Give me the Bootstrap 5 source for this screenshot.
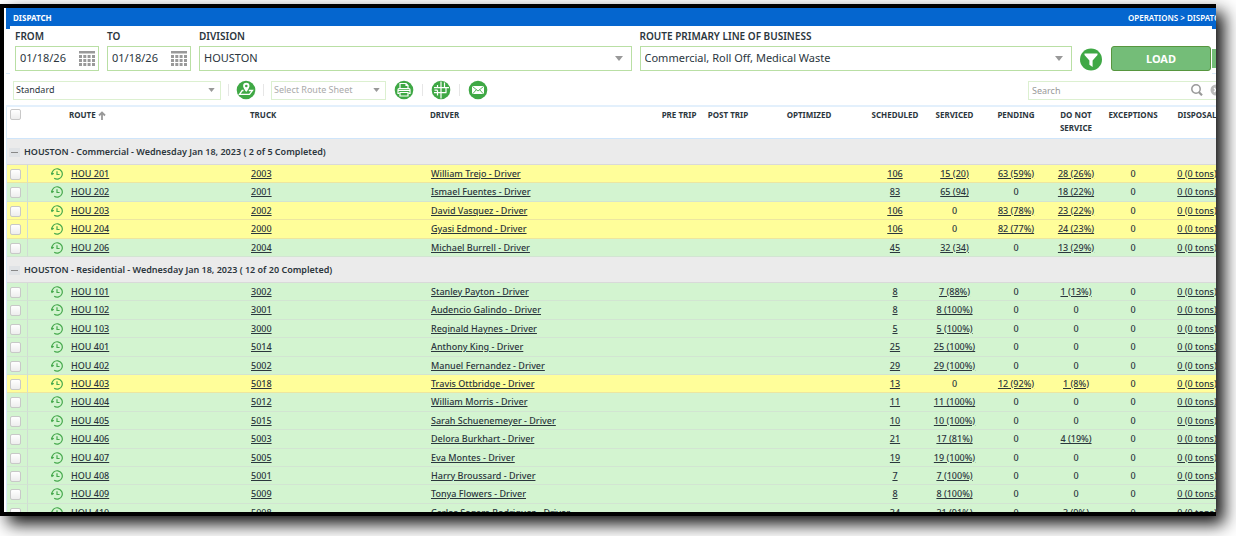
<!DOCTYPE html>
<html lang="en">
<head>
<meta charset="utf-8">
<meta name="viewport" content="width=device-width, initial-scale=1">
<title>Dispatch</title>
<link href="https://cdn.jsdelivr.net/npm/bootstrap@5.3.0/dist/css/bootstrap.min.css" rel="stylesheet">
<style>
  :root { --ink: #2b363d; --green: #3fa845; --line: #b9dfa4; --line-soft: #dcf0d0; --sky: #d9ebfa; }
  body { font-family: "Noto Sans", "Open Sans", sans-serif; font-size: 9px; line-height: 12px; color: var(--ink); background: #fff; padding: 4px 20px 20px 0; height: 100vh; overflow: hidden; }
  .app-frame { height: 100%; border: 4px solid #000; border-right: 0; box-shadow: 8px 8px 16px rgba(0,0,0,.95); background: #fff; padding-left: 2px; }
  .app-view { height: 100%; overflow: hidden; }
  .topbar { background: #0566cf; color: #fff; height: 21px; padding: 1px 0 3px 7px; font-size: 8px; font-weight: 700; white-space: nowrap; }
  .crumbs { width: 88px; font-weight: 600; }
  .crumbs a { color: #fff; text-decoration: none; }
  .filter-area { margin-top: -3px; height: 48px; }
  .edge { width: 4px; margin-top: 3px; border-bottom: 1px solid var(--sky); }
  .edge-green { height: 19px; margin-top: 20px; background: #74bd78; }
  .filters { background: #fff; padding: 3px 1px 0 5px; gap: 8px; }
  .filters label { display: block; font-size: 10px; font-weight: 600; line-height: 14px; margin-bottom: 3px; white-space: nowrap; }
  .filters .form-control, .filters .form-select { height: 25px; font-size: 11px; line-height: 16px; padding: 0 4px 2px; border: 1px solid var(--line); border-radius: 0; color: var(--ink); }
  .form-select { background-image: url("data:image/svg+xml,%3Csvg xmlns='http://www.w3.org/2000/svg' viewBox='0 0 8 5'%3E%3Cpath fill='%23999' d='M0 0h8L4 5z'/%3E%3C/svg%3E"); background-size: 8px 5px; background-position: right 8px center; }
  .datebox { width: 84px; }
  .cal-btn { position: absolute; right: 4px; top: 5px; width: 16px; height: 15px; }
  .plain-btn { border: 0; background: none; padding: 0; line-height: 0; display: block; }
  .btn-load { width: 100px; height: 25px; padding: 0; margin-top: 1px; border-radius: 3px; background: #74bd78; border: 1px solid #57963f; color: #fff; font-size: 11px; font-weight: 700; line-height: 20px; }
  .filter-btn { margin: 1px 1px 0 0; width: 22px; height: 24px; }
  .toolbar { height: 33px; padding: 7px 0 6px 7px; border-bottom: 2px solid #e3f0fc; }
  .toolbar .form-select, .toolbar .form-control { height: 19px; font-size: 9px; line-height: 12px; padding: 0 2px; border: 1px solid var(--line-soft); border-radius: 0; color: var(--ink); }
  .toolbar .form-select { background-size: 7px 4px; background-position: right 5px center; }
  .toolbar .sheet-select { color: #aaa; width: 115px; }
  .toolbar .view-select { width: 208px; }
  .sep { width: 1px; height: 12px; background: #e6e6e6; margin: 0 8px; }
  .sep-tight { margin: 0 7px; }
  .searchbox { width: 188px; height: 19px; border: 1px solid var(--line-soft); border-right: 0; gap: 7px; flex: none; }
  .searchbox .form-control { border: 0; height: 17px; padding-left: 3px; background: none; }
  .searchbox .form-control::placeholder { color: #999; opacity: 1; }
  .grid { table-layout: fixed; width: calc(100% + 17px); border-collapse: separate; border-spacing: 0; white-space: nowrap; border-left: 1px solid var(--sky); }
  .grid th, .grid td { padding: 0; text-align: center; vertical-align: middle; }
  .grid thead th { height: 32px; vertical-align: top; padding-top: 1px; line-height: 13px; font-size: 8px; font-weight: 700; border-bottom: 1px solid #cfe5fa; }
  .grid .txt { text-align: left; padding-left: 5px; }
  .grid thead .txt { padding-left: 4px; }
  .grid .route { padding-left: 23px; text-align: left; }
  .grid thead .route { padding-left: 41px; }
  .grid tr.group th { height: 26px; background: #ebebeb; text-align: left; font-size: 9px; font-weight: 600; border-bottom: 1px solid #d9d9d9; padding-left: 2px; }
  .group .toggle { width: 11px; height: 9px; background: #e0e3e6; margin-right: 4px; }
  .grid .line td { height: 18px; background: #d3f4d0; border-bottom: 1px solid #d2e4d2; font-weight: 500; line-height: 12px; }
  .grid .line:nth-child(5n+3) td, .grid .line:nth-child(5n) td { height: 19px; }
  .grid .line.late td { background: #fffe9a; border-bottom-color: #ece6a0; }
  .grid .line td:first-child { border-right: 1px solid #d0dcd4; }
  .grid a { color: inherit; text-decoration: underline; text-underline-offset: 1px; text-decoration-thickness: 1px; }
  .tick { appearance: none; display: block; width: 11px; height: 11px; margin: 1px 0 0 3px; border: 1px solid #c8c8c8; border-radius: 2px; background: linear-gradient(#fff, #ededed); }
  .tick:checked { background: var(--green); }
  .grid svg { vertical-align: middle; }
</style>
</head>
<body>
<div class="app-frame">
<main class="app-view">
  <header class="topbar d-flex align-items-center justify-content-between">
    <span>DISPATCH</span>
    <nav class="crumbs" aria-label="Breadcrumb"><a href="#">OPERATIONS</a> &gt; <a href="#">DISPATCH</a></nav>
  </header>

  <div class="filter-area d-flex">
    <div class="edge"></div>
    <form class="filters d-flex flex-fill align-items-start">
      <div class="datebox">
        <label for="from">FROM</label>
        <div class="position-relative">
          <input id="from" class="form-control" value="01/18/26">
          <button type="button" class="cal-btn plain-btn" aria-label="Pick from date"><svg width="16" height="15" viewBox="0 0 16 15"><use href="#i-cal"/></svg></button>
        </div>
      </div>
      <div class="datebox">
        <label for="to">TO</label>
        <div class="position-relative">
          <input id="to" class="form-control" value="01/18/26">
          <button type="button" class="cal-btn plain-btn" aria-label="Pick to date"><svg width="16" height="15" viewBox="0 0 16 15"><use href="#i-cal"/></svg></button>
        </div>
      </div>
      <div class="col">
        <label for="division">DIVISION</label>
        <select id="division" class="form-select"><option>HOUSTON</option></select>
      </div>
      <div class="col">
        <label for="lob">ROUTE PRIMARY LINE OF BUSINESS</label>
        <select id="lob" class="form-select"><option>Commercial, Roll Off, Medical Waste</option></select>
      </div>
      <div class="d-flex gap-2 align-self-start pt-3">
        <button type="button" class="filter-btn plain-btn" aria-label="More filters"><svg width="22" height="26" viewBox="0 0 22 26"><circle cx="11" cy="13.500" r="11" fill="#3fa845"/><path fill="#fff" d="M4.500 7.500h13v1.500l-4.900 5.500v6.500l-3.200-2.300v-4.200L4.500 9z"/></svg></button>
        <button type="button" class="btn btn-load">LOAD</button>
      </div>
    </form>
    <div class="edge"><div class="edge-green"></div></div>
  </div>

  <div class="toolbar d-flex align-items-center">
    <select class="form-select view-select" aria-label="View"><option>Standard</option></select>
    <span class="sep sep-tight"></span>
    <button type="button" class="plain-btn" aria-label="Route map"><svg width="20" height="20" viewBox="0 0 20 20"><circle cx="10" cy="10" r="9.300" fill="#3fa845"/><path d="M7.500 10.500H6.200L3.500 14.300h10l3-3.800h-3.700" fill="none" stroke="#fff" stroke-width="1.300"/><path fill="#fff" fill-rule="evenodd" d="M10.300 2.800a3.200 3.200 0 0 1 3.200 3.200c0 2.100-3.200 6-3.200 6S7.100 8.100 7.100 6a3.200 3.200 0 0 1 3.200-3.200zm0 1.900a1.300 1.300 0 1 0 0 2.600 1.300 1.300 0 0 0 0-2.600z"/></svg></button>
    <span class="sep sep-tight"></span>
    <select class="form-select sheet-select" aria-label="Route sheet"><option>Select Route Sheet</option></select>
    <button type="button" class="plain-btn ms-2" aria-label="Print"><svg width="20" height="20" viewBox="0 0 20 20"><circle cx="10" cy="10" r="9.300" fill="#3fa845"/><g fill="none" stroke="#fff" stroke-width="1.200"><path d="M6 8.500V3.500h6l2 2v3M12 3.500v2h2"/><path d="M5.500 13.500H4V9.700C4 9 4.400 8.600 5 8.600h10c.6 0 1 .4 1 1.100v3.800h-1.500M4 10.500h12"/><path d="M6 12.500h8v3.500H6z"/></g></svg></button>
    <span class="sep"></span>
    <button type="button" class="plain-btn" aria-label="Streets"><svg width="20" height="20" viewBox="0 0 20 20"><circle cx="10" cy="10" r="9.300" fill="#3fa845"/><g fill="none" stroke="#fff" stroke-width="1.200"><path d="M6.500 5v2.500M10 1.500v17M13.500 2.500v4.500M3 7.700h15M3 12.700h12.500M6.500 10.200V15.500M3.500 10.200h3M15 7.700v5"/></g></svg></button>
    <span class="sep"></span>
    <button type="button" class="plain-btn" aria-label="Message"><svg width="20" height="20" viewBox="0 0 20 20"><circle cx="10" cy="10" r="9.300" fill="#3fa845"/><rect x="4" y="6" width="12" height="8" rx="1" fill="#fff"/><path d="M4.500 6.500L10 11l5.500-4.500M4.800 13.700l3.600-4M15.200 13.700l-3.600-4" fill="none" stroke="#3fa845" stroke-width=".9"/></svg></button>
    <div class="searchbox d-flex align-items-center ms-auto">
      <input class="form-control flex-fill" type="text" placeholder="Search" aria-label="Search">
      <button type="button" class="plain-btn" aria-label="Search"><svg width="12" height="12" viewBox="0 0 12 12"><g fill="none" stroke="#999"><circle cx="5" cy="5" r="4.200" stroke-width="1.500"/><path d="M8 8.300l3 3" stroke-width="2.200"/></g></svg></button>
      <button type="button" class="plain-btn" aria-label="Clear"><svg width="6" height="12" viewBox="0 0 6 12"><circle cx="6" cy="6" r="5.500" fill="#bbb"/><path d="M4 4l4 4M4 8l4-4" stroke="#fff" stroke-width="1.300"/></svg></button>
    </div>
  </div>

  <table class="grid">
    <colgroup>
      <col style="width:21px"><col style="width:218px"><col style="width:180px"><col>
      <col style="width:50px"><col style="width:48px"><col style="width:114px"><col style="width:58px"><col style="width:61px">
      <col style="width:62px"><col style="width:58px"><col style="width:56px"><col style="width:72px">
    </colgroup>
    <thead>
      <tr>
        <th><input type="checkbox" class="tick" aria-label="Select all routes"></th>
        <th class="route">ROUTE <svg width="8" height="9" viewBox="0 0 8 9"><path d="M4 9V1.500M1 4.500l3-3 3 3" fill="none" stroke="#999" stroke-width="1.800"/></svg></th>
        <th class="txt">TRUCK</th><th class="txt">DRIVER</th><th>PRE TRIP</th><th>POST TRIP</th><th>OPTIMIZED</th>
        <th>SCHEDULED</th><th>SERVICED</th><th>PENDING</th><th>DO NOT<br>SERVICE</th><th>EXCEPTIONS</th><th>DISPOSAL</th>
      </tr>
    </thead>
  </table>
</main>
</div>

<svg class="d-none" aria-hidden="true">
  <symbol id="i-cal" viewBox="0 0 16 15"><path fill="#999" d="M0 0h16v2.500H0zM0 4h3v3H0zM4.300 4h3v3h-3zM8.600 4h3v3h-3zM13 4h3v3h-3zM0 8h3v3H0zM4.300 8h3v3h-3zM8.600 8h3v3h-3zM13 8h3v3h-3zM0 12h3v3H0zM4.300 12h3v3h-3zM8.600 12h3v3h-3zM13 12h3v3h-3z"/></symbol>
  <symbol id="i-clock" viewBox="0 0 12 12"><g fill="none" stroke="#45a84c" stroke-width="1.200"><path d="M.9 6.300A5.200 5.200 0 1 1 3.200 10.300M0 4.800l1 1.700 1.700-1.200M6 3.200v3.300h2.600"/></g></symbol>
</svg>

<script src="https://cdn.jsdelivr.net/npm/bootstrap@5.3.0/dist/js/bootstrap.bundle.min.js"></script>
<script>
  // route, truck, driver, scheduled, serviced, pending, do not service
  const groups = [
    ['HOUSTON - Commercial - Wednesday Jan 18, 2023 ( 2 of 5 Completed)', [
      ['201', '2003', 'William Trejo', '106', '15 (20)', '63 (59%)', '28 (26%)'],
      ['202', '2001', 'Ismael Fuentes', '83', '65 (94)', '0', '18 (22%)'],
      ['203', '2002', 'David Vasquez', '106', '0', '83 (78%)', '23 (22%)'],
      ['204', '2000', 'Gyasi Edmond', '106', '0', '82 (77%)', '24 (23%)'],
      ['206', '2004', 'Michael Burrell', '45', '32 (34)', '0', '13 (29%)']]],
    ['HOUSTON - Residential - Wednesday Jan 18, 2023 ( 12 of 20 Completed)', [
      ['101', '3002', 'Stanley Payton', '8', '7 (88%)', '0', '1 (13%)'],
      ['102', '3001', 'Audencio Galindo', '8', '8 (100%)', '0', '0'],
      ['103', '3000', 'Reginald Haynes', '5', '5 (100%)', '0', '0'],
      ['401', '5014', 'Anthony King', '25', '25 (100%)', '0', '0'],
      ['402', '5002', 'Manuel Fernandez', '29', '29 (100%)', '0', '0'],
      ['403', '5018', 'Travis Ottbridge', '13', '0', '12 (92%)', '1 (8%)'],
      ['404', '5012', 'William Morris', '11', '11 (100%)', '0', '0'],
      ['405', '5015', 'Sarah Schuenemeyer', '10', '10 (100%)', '0', '0'],
      ['406', '5003', 'Delora Burkhart', '21', '17 (81%)', '0', '4 (19%)'],
      ['407', '5005', 'Eva Montes', '19', '19 (100%)', '0', '0'],
      ['408', '5001', 'Harry Broussard', '7', '7 (100%)', '0', '0'],
      ['409', '5009', 'Tonya Flowers', '8', '8 (100%)', '0', '0'],
      ['410', '5008', 'Carlos Segara Rodriguez', '34', '31 (91%)', '0', '3 (9%)']]]
  ];
  const link = t => t === '0' ? t : `<a href="#">${t}</a>`;
  const row = ([r, truck, driver, ...n]) => `<tr class="line${n[2] === '0' ? '' : ' late'}">
    <td><input type="checkbox" class="tick" aria-label="Select HOU ${r}"></td>
    <td class="route"><div class="d-flex align-items-center gap-2"><svg width="12" height="12"><use href="#i-clock"/></svg>${link('HOU ' + r)}</div></td>
    <td class="txt">${link(truck)}</td><td class="txt">${link(driver + ' - Driver')}</td><td></td><td></td><td></td>
    ${n.map(v => `<td>${link(v)}</td>`).join('')}<td>0</td><td>${link('0 (0 tons)')}</td></tr>`;
  document.querySelector('.grid').insertAdjacentHTML('beforeend', groups.map(([title, rows]) =>
    `<tbody><tr class="group"><th colspan="13"><svg class="toggle" viewBox="0 0 11 9"><path d="M2 4.500h7" stroke="#888"/></svg>${title}</th></tr>${rows.map(row).join('')}</tbody>`).join(''));
</script>
</body>
</html>
